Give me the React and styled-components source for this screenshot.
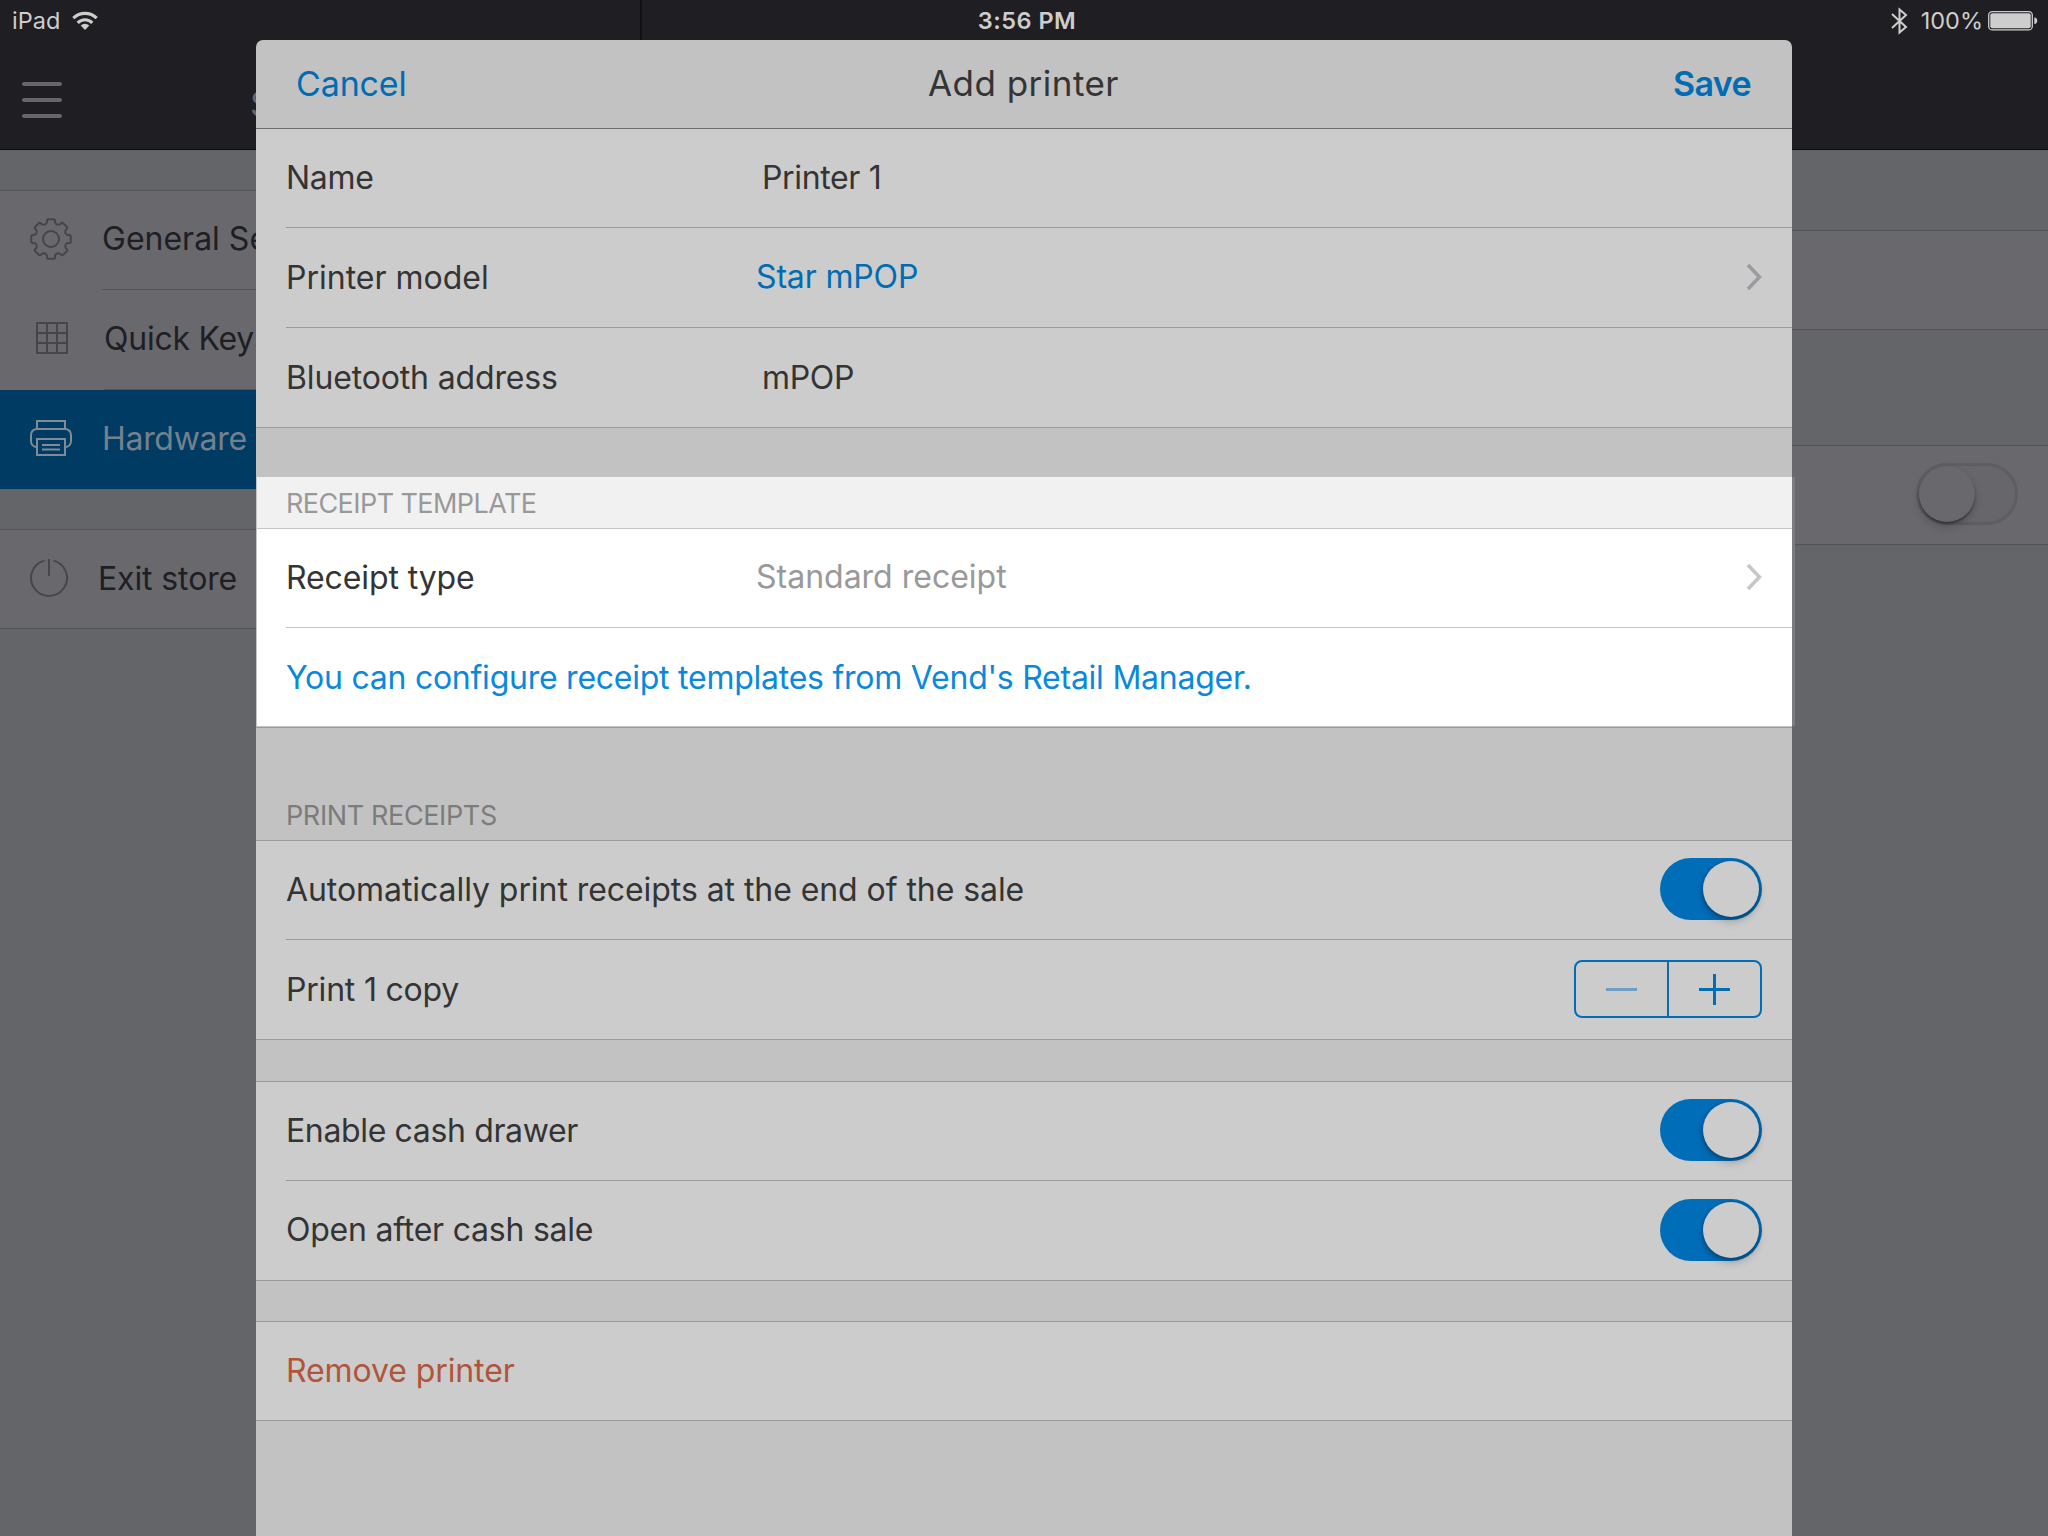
import React from "react";
import styled, { createGlobalStyle } from "styled-components";

const Global = createGlobalStyle`
  *, *::before, *::after { box-sizing: border-box; }
  html, body { margin: 0; padding: 0; background: #646569; }
  body { font-family: Inter, "Liberation Sans", sans-serif; overflow: hidden; }
`;

const Screen = styled.div`
  position: relative;
  width: 2048px;
  height: 1536px;
  overflow: hidden;
  display: flex;
  flex-direction: column;
  background: #646569;
`;

const TopBar = styled.header`
  flex: none;
  height: 150px;
  background: #1e1e23;
  border-bottom: 1px solid #0b0b0d;
  display: grid;
  grid-template-columns: 642px 1fr;
  grid-template-rows: 40px 1fr;
`;

const StatusBar = styled.div`
  position: absolute;
  inset: 0 0 auto 0;
  height: 42px;
  padding: 0 10px 0 12px;
  display: grid;
  grid-template-columns: 1fr auto 1fr;
  align-items: center;
  color: #cdcdcd;
  font-size: 23.5px;
  line-height: 42px;
`;

const StatusGroup = styled.div`
  display: flex;
  align-items: center;
  justify-content: ${(p) => (p.$end ? "flex-end" : "flex-start")};
  height: 42px;
`;

const StatusText = styled.span`
  font-weight: ${(p) => p.$weight || 400};
  letter-spacing: ${(p) => p.$track || 0}px;
  padding-left: ${(p) => p.$pl || 0}px;
`;

const NavSide = styled.div`
  grid-row: 1 / 3;
  padding: 50px 0 0 22px;
  display: flex;
  align-items: center;
  border-right: 2px solid #121216;
`;

const Burger = styled.div`
  display: flex;
  flex-direction: column;
  gap: 12px;
  width: 40px;
  i { height: 4px; border-radius: 2px; background: #66676b; }
`;

const NavTitle = styled.div`
  margin-left: 188px;
  margin-top: 9px;
  font-size: 34px;
  line-height: 40px;
  color: #66676b;
`;

const Body = styled.div`
  flex: 1;
  display: grid;
  grid-template-columns: 642px 1fr;
`;

const Sidebar = styled.nav`
  display: flex;
  flex-direction: column;
`;

const SideGap = styled.div`
  height: ${(p) => p.$h}px;
  border-bottom: 1px solid #535458;
`;

const SideRow = styled.div`
  height: ${(p) => p.$h || 99}px;
  display: flex;
  align-items: stretch;
  background: ${(p) => (p.$active ? "#003b63" : "#69686d")};
  color: ${(p) => (p.$active ? "#74818d" : "#1e1f23")};
  border-bottom: ${(p) => (p.$end ? "1px solid #535458" : "none")};
`;

const SideIcon = styled.div`
  width: ${(p) => p.$w || 102}px;
  padding: 0 0 ${(p) => p.$pb || 3}px 29px;
  display: flex;
  align-items: center;
  color: ${(p) => (p.$active ? "#7f8b96" : "#45464a")};
`;

const SideLabel = styled.div`
  flex: 1;
  display: flex;
  align-items: center;
  padding-bottom: ${(p) => p.$pb || 3}px;
  font-size: 32px;
  letter-spacing: ${(p) => p.$track || 0}px;
  border-bottom: ${(p) => (p.$line ? "1px solid #535458" : "none")};
`;

const Content = styled.main`
  display: flex;
  flex-direction: column;
`;

const ContentGap = styled.div`
  height: ${(p) => p.$h}px;
  border-bottom: 1px solid #515256;
`;

const ContentRow = styled.div`
  height: 99px;
  padding-right: 30px;
  display: flex;
  align-items: center;
  justify-content: flex-end;
  background: #69686d;
  border-bottom: 1px solid #515256;
`;

const Sheet = styled.section`
  position: absolute;
  left: 256px;
  top: 40px;
  width: 1536px;
  height: 1496px;
  border-radius: 7px 7px 0 0;
  background: #c2c2c2;
  display: flex;
  flex-direction: column;
`;

const SheetHeader = styled.div`
  flex: none;
  height: 89px;
  padding: 0 41px 1px 40px;
  display: grid;
  grid-template-columns: 1fr auto 1fr;
  align-items: center;
  border-bottom: 1px solid #6e6e6f;
`;

const SheetTitle = styled.h1`
  margin: 0;
  padding-bottom: 2px;
  font-weight: 400;
  font-size: 35px;
  letter-spacing: 0.47px;
  color: #343434;
`;

const HeaderButton = styled.span`
  font-size: 34px;
  color: #006cb4;
  font-weight: ${(p) => (p.$bold ? 600 : 400)};
  justify-self: ${(p) => (p.$bold ? "end" : "start")};
  letter-spacing: ${(p) => (p.$bold ? -0.6 : -0.15)}px;
`;

const Spacer = styled.div`
  flex: none;
  height: ${(p) => p.$h}px;
  border-bottom: ${(p) => (p.$plain ? "none" : "1px solid #9a9b9d")};
`;

const SectionLabel = styled.div`
  flex: none;
  height: ${(p) => p.$h}px;
  padding: 0 0 7px 30px;
  display: flex;
  align-items: flex-end;
  font-size: 27px;
  line-height: 34px;
  letter-spacing: ${(p) => p.$track || 0}px;
  color: ${(p) => (p.$lit ? "#999" : "#7c7c7c")};
  border-bottom: 1px solid ${(p) => (p.$lit ? "#c4c4c6" : "#9a9b9d")};
`;

const Group = styled.div`
  flex: none;
  padding-left: 30px;
  background: ${(p) => (p.$lit ? "#fff" : "#ccc")};
  border-bottom: 1px solid ${(p) => (p.$lit ? "#c4c4c6" : "#9a9b9d")};
`;

const Row = styled.div`
  height: ${(p) => p.$h || 99}px;
  padding-right: 30px;
  display: flex;
  align-items: center;
  border-bottom: ${(p) => (p.$line ? `1px solid ${p.$lit ? "#c4c4c6" : "#9a9b9d"}` : "none")};
`;

const Label = styled.span`
  flex: ${(p) => (p.$fixed ? "none" : "1")};
  width: ${(p) => (p.$fixed ? `${p.$fixed}px` : "auto")};
  padding-bottom: ${(p) => (p.$pb === undefined ? 2 : p.$pb)}px;
  font-size: 32px;
  letter-spacing: ${(p) => p.$track || 0}px;
  white-space: nowrap;
  color: ${(p) => p.$color || "#343434"};
`;

const Highlight = styled.div`
  position: relative;
  flex: none;
  height: 250px;
  background: #f1f1f1;
  border-left: 1px solid #c4c4c4;
  ${Group}, ${SectionLabel} { padding-left: 29px; }
  &::after {
    content: "";
    position: absolute;
    left: 100%;
    top: 0;
    width: 3px;
    height: 249px;
    background: #7c7c80;
  }
`;

const Track = styled.div`
  flex: none;
  width: 102px;
  height: 62px;
  border-radius: 31px;
  margin-bottom: 2px;
  display: flex;
  justify-content: ${(p) => (p.$on ? "flex-end" : "flex-start")};
  background: ${(p) => (p.$on ? "#006db9" : "#66666b")};
  border: ${(p) => (p.$on ? "none" : "3px solid #5d5e62")};
  padding: ${(p) => (p.$on ? "3px" : "0")};
`;

const Knob = styled.div`
  width: 56px;
  height: 56px;
  border-radius: 50%;
  background: ${(p) => (p.$on ? "#ccc" : "#69686d")};
  box-shadow: ${(p) =>
    p.$on
      ? "0 5px 8px rgba(0,0,0,.18), 0 1px 4px rgba(0,0,0,.35)"
      : "0 5px 8px rgba(0,0,0,.18), 0 2px 2px rgba(0,0,0,.35)"};
`;

const Stepper = styled.div`
  flex: none;
  width: 188px;
  height: 58px;
  margin-bottom: 1px;
  display: grid;
  grid-template-columns: 93px 1fr;
  border: 2px solid #006db9;
  border-radius: 8px;
`;

const StepButton = styled.div`
  display: flex;
  align-items: center;
  justify-content: center;
  color: ${(p) => (p.$off ? "#6d9dc0" : "#006db4")};
  border-right: ${(p) => (p.$off ? "2px solid #0f6aa6" : "none")};
`;

const ChevronBox = styled.span`
  display: flex;
  padding-bottom: 2px;
`;

const Chevron = ({ color }) => (
  <ChevronBox>
    <svg width="16" height="28" viewBox="0 0 16 28" fill="none" stroke={color} strokeWidth="3.600">
      <path d="M2 2 L13.400 14 L2 26" />
    </svg>
  </ChevronBox>
);

const TOOTH = [
  [-0.39, 15.6], [-0.29, 16.3], [-0.23, 17.2], [-0.21, 19.2], [-0.16, 20],
  [0.16, 20], [0.21, 19.2], [0.23, 17.2], [0.29, 16.3], [0.39, 15.6],
];

const Gear = () => {
  const pts = [];
  for (let i = 0; i < 8; i++) {
    TOOTH.forEach(([a, r]) => {
      const t = (i * Math.PI) / 4 + a;
      pts.push(`${(22 + r * Math.sin(t)).toFixed(2)},${(22 - r * Math.cos(t)).toFixed(2)}`);
    });
  }
  return (
    <svg width="44" height="44" fill="none" stroke="currentColor" strokeWidth="2" strokeLinejoin="round">
      <polygon points={pts.join(" ")} />
      <circle cx="22" cy="22" r="8" />
    </svg>
  );
};

const GridIcon = () => (
  <svg width="46" height="44" fill="none" stroke="currentColor" strokeWidth="2">
    <rect x="8" y="7" width="30" height="30" />
    <path d="M18 7V37M28 7V37M8 17H38M8 27H38" />
  </svg>
);

const PrinterIcon = () => (
  <svg width="44" height="44" fill="none" stroke="currentColor" strokeWidth="2">
    <path d="M8 13V5H36V13" />
    <path d="M8 31C4 31 2 28 2 25V19.500C2 15.500 4.500 13 8.500 13H35.500C39.500 13 42 15.500 42 19.500V25C42 28 40 31 36 31" />
    <rect x="8" y="23" width="28" height="16" />
    <path d="M13 29H31M13 33.500H31" />
  </svg>
);

const PowerIcon = () => (
  <svg width="44" height="44" fill="none" stroke="currentColor" strokeWidth="1.900">
    <path d="M15.300 4.600A18 18 0 1 0 24.700 4.600" />
    <path d="M20 3V20" />
  </svg>
);

const Wifi = () => (
  <svg width="26" height="20" viewBox="0 0 26 20" fill="none" stroke="currentColor" strokeWidth="3.200">
    <path d="M1.300 7.200A16.500 16.500 0 0 1 24.700 7.200" />
    <path d="M5.700 11.800A10.300 10.300 0 0 1 20.300 11.800" />
    <path d="M13 19L8.700 14.500A6.200 6.200 0 0 1 17.300 14.500Z" fill="currentColor" stroke="none" />
  </svg>
);

const Bluetooth = () => (
  <svg width="17" height="28" viewBox="0 0 17 28" fill="none" stroke="currentColor" strokeWidth="2">
    <path d="M1 7L15 20L8.500 25.500V2.500L15 8L1 21" />
  </svg>
);

const Battery = () => (
  <svg width="50" height="20" viewBox="0 0 50 20">
    <rect x="0.700" y="0.700" width="43.600" height="18.200" rx="3.500" fill="none" stroke="currentColor" strokeWidth="1.300" />
    <rect x="2.300" y="2.300" width="40.400" height="15" rx="2" fill="currentColor" />
    <path d="M46.300 6.300A3.500 3.500 0 0 1 46.300 13.200Z" fill="currentColor" />
  </svg>
);

const Toggle = ({ on }) => (
  <Track $on={on}>
    <Knob $on={on} />
  </Track>
);

const IconGap = styled.span`
  display: flex;
  margin-left: ${(p) => p.$l || 0}px;
`;

export default function App() {
  return (
    <Screen>
      <Global />
      <TopBar>
        <NavSide>
          <Burger><i /><i /><i /></Burger>
          <NavTitle>Settings</NavTitle>
        </NavSide>
      </TopBar>
      <Body>
        <Sidebar>
          <SideGap $h={41} />
          <SideRow>
            <SideIcon><Gear /></SideIcon>
            <SideLabel $line>General Settings</SideLabel>
          </SideRow>
          <SideRow $h={100}>
            <SideIcon $w={104} $pb={4}><GridIcon /></SideIcon>
            <SideLabel $line $track={-0.25}>Quick Keys</SideLabel>
          </SideRow>
          <SideRow $active>
            <SideIcon $active><PrinterIcon /></SideIcon>
            <SideLabel $track={-0.3}>Hardware</SideLabel>
          </SideRow>
          <SideGap $h={41} />
          <SideRow $end>
            <SideIcon $w={98}><PowerIcon /></SideIcon>
            <SideLabel $track={-0.12} $pb={2}>Exit store</SideLabel>
          </SideRow>
        </Sidebar>
        <Content>
          <ContentGap $h={81} />
          <ContentRow />
          <ContentGap $h={116} />
          <ContentRow><Toggle /></ContentRow>
        </Content>
      </Body>

      <Sheet>
        <SheetHeader>
          <HeaderButton>Cancel</HeaderButton>
          <SheetTitle>Add printer</SheetTitle>
          <HeaderButton $bold>Save</HeaderButton>
        </SheetHeader>
        <Group>
          <Row $line>
            <Label $fixed={476} $track={-0.3}>Name</Label>
            <Label $track={-0.35}>Printer 1</Label>
          </Row>
          <Row $line $h={100}>
            <Label $fixed={470} $pb={1}>Printer model</Label>
            <Label $color="#006cb4" $track={-0.15}>Star mPOP</Label>
            <Chevron color="#9c9ca0" />
          </Row>
          <Row>
            <Label $fixed={476} $track={-0.15} $pb={0}>Bluetooth address</Label>
            <Label $track={-0.3} $pb={0}>mPOP</Label>
          </Row>
        </Group>
        <Spacer $h={49} $plain />
        <Highlight>
          <SectionLabel $h={52} $lit $track={-0.57}>RECEIPT TEMPLATE</SectionLabel>
          <Group $lit>
            <Row $line $lit>
              <Label $fixed={470} $track={-0.1}>Receipt type</Label>
              <Label $color="#999" $pb={4}>Standard receipt</Label>
              <Chevron color="#c7c7cb" />
            </Row>
            <Row $h={98}>
              <Label $color="#0a88dc" $track={-0.245} $pb={0}>You can configure receipt templates from Vend's Retail Manager.</Label>
            </Row>
          </Group>
        </Highlight>
        <Spacer $h={1} />
        <SectionLabel $h={113} $track={-0.37}>PRINT RECEIPTS</SectionLabel>
        <Group>
          <Row $line>
            <Label $track={-0.065}>Automatically print receipts at the end of the sale</Label>
            <Toggle on />
          </Row>
          <Row>
            <Label $track={-0.2} $pb={0}>Print 1 copy</Label>
            <Stepper>
              <StepButton $off>
                <svg width="31" height="31"><path d="M0 15.500H31" stroke="currentColor" strokeWidth="3" /></svg>
              </StepButton>
              <StepButton>
                <svg width="31" height="31"><path d="M0 15.500H31M15.500 0V31" stroke="currentColor" strokeWidth="3" /></svg>
              </StepButton>
            </Stepper>
          </Row>
        </Group>
        <Spacer $h={42} />
        <Group>
          <Row $line>
            <Label $track={-0.36}>Enable cash drawer</Label>
            <Toggle on />
          </Row>
          <Row>
            <Label $track={-0.23}>Open after cash sale</Label>
            <Toggle on />
          </Row>
        </Group>
        <Spacer $h={41} />
        <Group>
          <Row $h={98}>
            <Label $color="#b0553a" $track={-0.1}>Remove printer</Label>
          </Row>
        </Group>
      </Sheet>

      <StatusBar>
        <StatusGroup>
          <StatusText>iPad</StatusText>
          <IconGap $l={12}><Wifi /></IconGap>
        </StatusGroup>
        <StatusText $weight={600} $track={0.5} $pl={4}>3:56 PM</StatusText>
        <StatusGroup $end>
          <Bluetooth />
          <IconGap $l={13} />
          <StatusText>100%</StatusText>
          <IconGap $l={5}><Battery /></IconGap>
        </StatusGroup>
      </StatusBar>
    </Screen>
  );
}
